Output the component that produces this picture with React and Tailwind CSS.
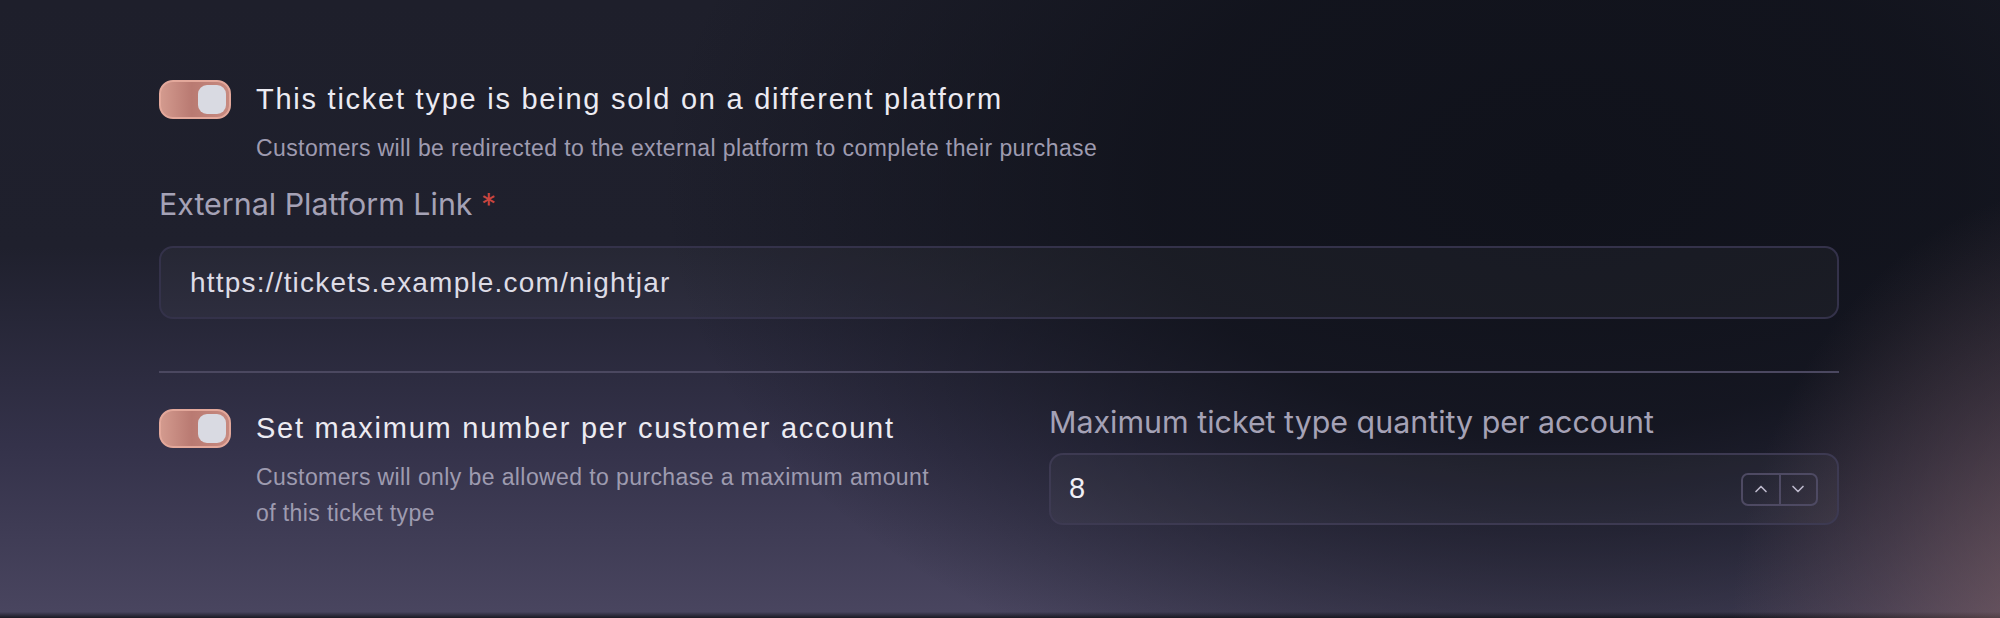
import { ChevronUp, ChevronDown } from 'lucide-react';

function Toggle() {
  return (
    <div className="flex h-[39px] w-[72px] shrink-0 items-center justify-end rounded-[14px] border-2 border-[#e3a89b] bg-[linear-gradient(90deg,#d39a8e_0%,#b97a72_45%,#c78a80_100%)] pr-[3px]">
      <div className="h-[29px] w-[28px] rounded-[9px] bg-[#d9dae2]" />
    </div>
  );
}

function ToggleRow({ title, desc }) {
  return (
    <div className="flex items-start gap-[25px]">
      <Toggle />
      <div>
        <p className="font-['Liberation_Sans',Arial,sans-serif] text-[29px] leading-[39px] tracking-[1.75px] text-[#ecebf2]">
          {title}
        </p>
        <p className="mt-[11px] font-['Liberation_Sans',Arial,sans-serif] text-[23px] leading-[36px] tracking-[0.4px] text-[#9e9bb0]">
          {desc}
        </p>
      </div>
    </div>
  );
}

export default function App() {
  return (
    <div className="relative h-[618px] w-full overflow-hidden bg-[linear-gradient(180deg,#1e1f2b_0%,#1f202d_40%,#34324a_72%,#49455f_99%,#1a1a24_100%)]">
      {/* background glows */}
      <div className="pointer-events-none absolute inset-0 bg-[radial-gradient(ellipse_900px_560px_at_1560px_180px,rgba(16,18,27,1)_0%,rgba(16,18,27,0.85)_45%,rgba(16,18,27,0)_100%)]" />
      <div className="pointer-events-none absolute inset-0 bg-[radial-gradient(ellipse_480px_620px_at_2090px_650px,rgba(130,98,100,0.75)_0%,rgba(110,84,92,0.35)_45%,rgba(60,50,70,0)_75%)]" />

      <div className="relative ml-[159px] w-[1680px] pt-[80px]">
        <ToggleRow
          title="This ticket type is being sold on a different platform"
          desc="Customers will be redirected to the external platform to complete their purchase"
        />

        <label className="mt-[21px] block font-['Inter',sans-serif] text-[30.4px] leading-[34px] text-[#a5a2b6]">
          External Platform Link <span className="text-[#c9453f]">*</span>
        </label>
        <div className="mt-[25px] flex h-[73px] items-center rounded-[14px] border-2 border-[#34324a] bg-[rgba(255,255,255,0.035)] px-[29px]">
          <span className="font-['Liberation_Sans',Arial,sans-serif] text-[28px] tracking-[1.2px] text-[#dddce6]">
            https://tickets.example.com/nightjar
          </span>
        </div>

        <div className="mt-[52px] h-[2px] bg-[#4b4860]" />

        <div className="mt-[32px] grid grid-cols-2 gap-[100px]">
          <div className="pt-[4px] pr-[10px]">
            <ToggleRow
              title="Set maximum number per customer account"
              desc="Customers will only be allowed to purchase a maximum amount of this ticket type"
            />
          </div>
          <div>
            <label className="block font-['Inter',sans-serif] text-[30.4px] leading-[34px] text-[#a5a2b6]">
              Maximum ticket type quantity per account
            </label>
            <div className="mt-[14px] flex h-[72px] items-center justify-between rounded-[14px] border-2 border-[#3d3a52] bg-[rgba(255,255,255,0.035)] pl-[18px] pr-[19px]">
              <span className="font-['Liberation_Sans',Arial,sans-serif] text-[29px] text-[#f0eff5]">8</span>
              <div className="flex h-[33px] w-[77px] overflow-hidden rounded-[7px] border-2 border-[#4e4a63]">
                <div className="flex flex-1 items-center justify-center border-r-2 border-[#4e4a63] text-[#bdb9cc]">
                  <ChevronUp size={20} strokeWidth={2} />
                </div>
                <div className="flex flex-1 items-center justify-center text-[#bdb9cc]">
                  <ChevronDown size={20} strokeWidth={2} />
                </div>
              </div>
            </div>
          </div>
        </div>
      </div>
    </div>
  );
}
